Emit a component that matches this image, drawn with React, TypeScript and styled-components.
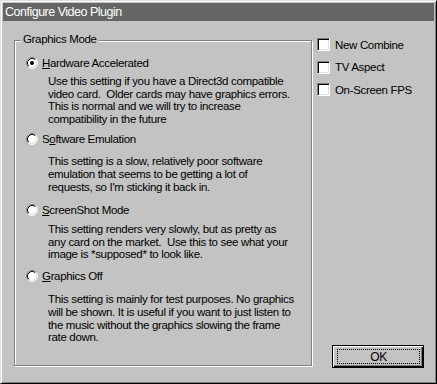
import styled, { createGlobalStyle } from "styled-components";

const GlobalStyle = createGlobalStyle`
  html, body {
    margin: 0;
    padding: 0;
    background: #c3c3c3;
  }
  body {
    font-family: "Liberation Sans", Arial, sans-serif;
  }
`;

const options = [
  {
    label: "Hardware Accelerated",
    key: 0,
    checked: true,
    top: 0,
    gap: 5,
    text: "Use this setting if you have a Direct3d compatible\nvideo card.  Older cards may have graphics errors.\nThis is normal and we will try to increase\ncompatibility in the future",
  },
  {
    label: "Software Emulation",
    key: 1,
    checked: false,
    top: 8,
    gap: 9,
    text: "This setting is a slow, relatively poor software\nemulation that seems to be getting a lot of\nrequests, so I'm sticking it back in.",
  },
  {
    label: "ScreenShot Mode",
    key: 0,
    checked: false,
    top: 11,
    gap: 6,
    text: "This setting renders very slowly, but as pretty as\nany card on the market.  Use this to see what your\nimage is *supposed* to look like.",
  },
  {
    label: "Graphics Off",
    key: 0,
    checked: false,
    top: 9.5,
    gap: 10,
    text: "This setting is mainly for test purposes. No graphics\nwill be shown. It is useful if you want to just listen to\nthe music without the graphics slowing the frame\nrate down.",
  },
];

const checks = ["New Combine", "TV Aspect", "On-Screen FPS"];

function Radio({ checked }: { checked: boolean }) {
  return (
    <RadioIcon width="12" height="12" viewBox="0 0 12 12">
      <circle cx="6" cy="6" r="5" fill="#fff" />
      <path d="M2.11 9.89 A5.5 5.5 0 0 1 9.89 2.11" stroke="#808080" fill="none" />
      <path d="M9.89 2.11 A5.5 5.5 0 0 1 2.11 9.89" stroke="#fff" fill="none" />
      <path d="M2.82 9.18 A4.5 4.5 0 0 1 9.18 2.82" stroke="#000" fill="none" />
      <path d="M9.18 2.82 A4.5 4.5 0 0 1 2.82 9.18" stroke="#dfdfdf" fill="none" />
      {checked && <circle cx="6" cy="6" r="2" fill="#000" />}
    </RadioIcon>
  );
}

export default function App() {
  return (
    <>
      <GlobalStyle />
      <Window>
        <TitleBar>Configure Video Plugin</TitleBar>
        <Body>
          <GroupBox>
            <GroupLabel>Graphics Mode</GroupLabel>
            {options.map((o) => (
              <Option key={o.label} $top={o.top}>
                <OptionRow>
                  <Radio checked={o.checked} />
                  <span>
                    {o.label.slice(0, o.key)}
                    <u>{o.label[o.key]}</u>
                    {o.label.slice(o.key + 1)}
                  </span>
                </OptionRow>
                <Description $gap={o.gap}>{o.text}</Description>
              </Option>
            ))}
          </GroupBox>
          <SideColumn>
            <CheckList>
              {checks.map((c) => (
                <CheckRow key={c}>
                  <CheckBox />
                  {c}
                </CheckRow>
              ))}
            </CheckList>
            <OkButton>
              <FocusRect>OK</FocusRect>
            </OkButton>
          </SideColumn>
        </Body>
      </Window>
    </>
  );
}

const Window = styled.div`
  width: 437px;
  height: 384px;
  box-sizing: border-box;
  border: 1px solid;
  border-color: #dfdfdf #000 #000 #dfdfdf;
  box-shadow: inset 1px 1px 0 #fff, inset -1px -1px 0 #808080;
  padding: 2px;
  background: #c3c3c3;
  display: flex;
  flex-direction: column;
  font-size: 11.5px;
  letter-spacing: -0.33px;
  color: #000;
`;

const TitleBar = styled.div`
  height: 18px;
  line-height: 18px;
  background: #656565;
  color: #fff;
  font-size: 12.5px;
  letter-spacing: -0.5px;
  padding-left: 2px;
  flex-shrink: 0;
`;

const Body = styled.div`
  flex: 1;
  display: flex;
  padding: 17px 0 13px 11px;
`;

const GroupBox = styled.div`
  position: relative;
  box-sizing: border-box;
  width: 298px;
  height: 326px;
  margin-top: 2px;
  border: 1px solid #808080;
  box-shadow: 1px 1px 0 #fff, inset 1px 1px 0 #fff;
  padding: 16px 0 0 11px;
`;

const GroupLabel = styled.div`
  position: absolute;
  top: -8px;
  left: 6px;
  padding: 0 2px;
  line-height: 13px;
  background: #c3c3c3;
`;

const Option = styled.div<{ $top: number }>`
  margin-top: ${(p) => p.$top}px;
`;

const OptionRow = styled.div`
  display: flex;
  align-items: flex-start;
  gap: 4px;
  height: 13px;
  line-height: 13px;
  white-space: nowrap;
`;

const RadioIcon = styled.svg`
  display: block;
  flex-shrink: 0;
`;

const Description = styled.div<{ $gap: number }>`
  margin-top: ${(p) => p.$gap}px;
  padding-left: 22px;
  line-height: 12.6px;
  white-space: pre;
`;

const SideColumn = styled.div`
  display: flex;
  flex-direction: column;
  margin-left: 5px;
`;

const CheckList = styled.div`
  display: flex;
  flex-direction: column;
  gap: 9.5px;
`;

const CheckRow = styled.div`
  display: flex;
  align-items: center;
  gap: 5px;
  height: 13px;
  white-space: nowrap;
`;

const CheckBox = styled.div`
  box-sizing: border-box;
  width: 13px;
  height: 13px;
  background: #fff;
  border: 1px solid;
  border-color: #808080 #fff #fff #808080;
  box-shadow: inset 1px 1px 0 #000, inset -1px -1px 0 #dfdfdf;
`;

const OkButton = styled.div`
  margin-top: auto;
  margin-left: 15px;
  box-sizing: border-box;
  width: 92px;
  height: 23px;
  border: 1px solid #000;
  box-shadow: inset 1px 1px 0 #fff, inset -1px -1px 0 #000, inset -2px -2px 0 #808080;
  display: flex;
  padding: 3px 3px 3px 4px;
`;

const FocusRect = styled.div`
  flex: 1;
  border: 1px dotted #000;
  display: flex;
  align-items: center;
  justify-content: center;
  font-size: 12px;
`;
